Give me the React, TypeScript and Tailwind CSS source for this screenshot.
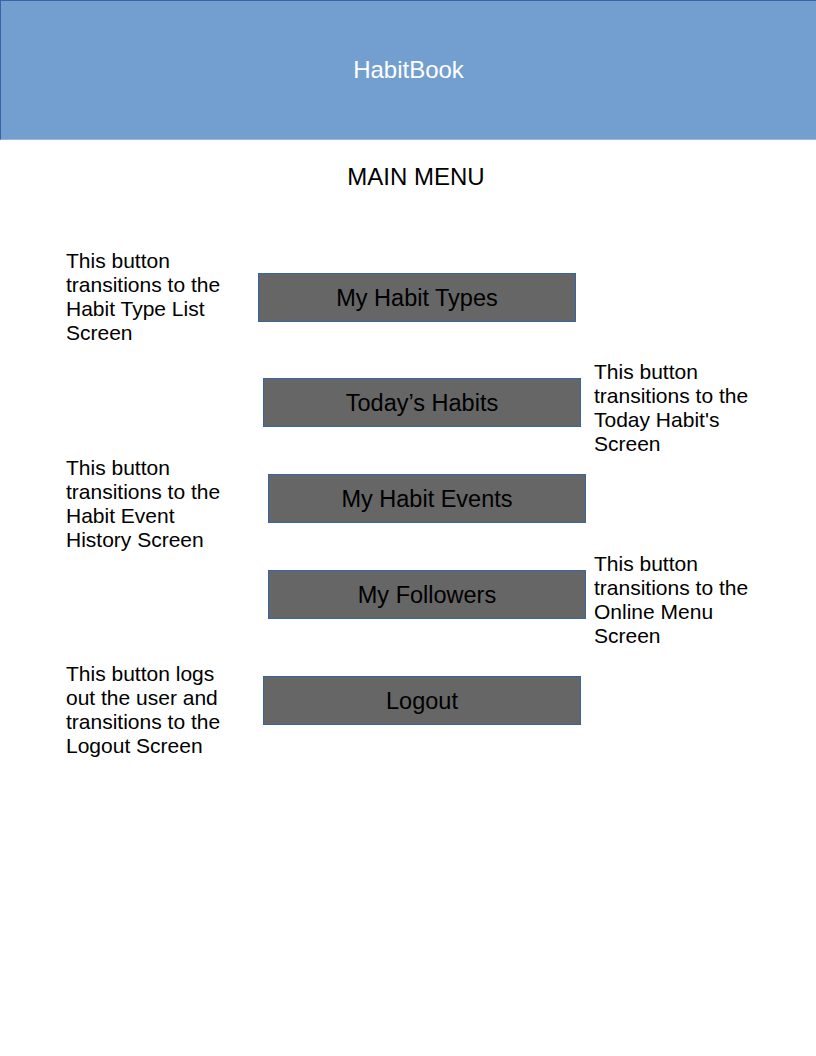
import React from "react";

const font = { fontFamily: '"Liberation Sans", Arial, sans-serif' };

function Note({ children }: { children: React.ReactNode }) {
  return <div className="w-[170px] -mt-[2px] text-[21px] leading-[24px] text-black">{children}</div>;
}

function Btn({ label }: { label: string }) {
  return (
    <div className="w-[318px] h-[49px] pt-[2px] bg-[#666666] border border-[#3465a4] flex items-center justify-center text-[23.5px] text-black">
      {label}
    </div>
  );
}

export default function App() {
  return (
    <div className="w-[816px] h-[1056px] bg-white overflow-hidden" style={font}>
      <div className="h-[140px] bg-[#729fcf] border-t border-l border-[#3465a4] border-b border-b-[#9db6da] flex items-center justify-center">
        <span className="text-white text-[24px]">HabitBook</span>
      </div>

      <div className="mt-[23px] pl-[16px] text-center text-[24px] leading-[28px] text-black">MAIN MENU</div>

      {/* Row 1 */}
      <div className="flex mt-[60px] h-[96px]">
        <div className="ml-[66px] w-[192px]">
          <Note>This button transitions to the Habit Type List Screen</Note>
        </div>
        <div className="mt-[22px]">
          <Btn label="My Habit Types" />
        </div>
      </div>

      {/* Row 2 */}
      <div className="flex mt-[15px] h-[96px]">
        <div className="ml-[66px] w-[192px]" />
        <div className="mt-[16px] ml-[5px]">
          <Btn label="Today’s Habits" />
        </div>
        <div className="ml-[13px]">
          <Note>This button transitions to the Today Habit's Screen</Note>
        </div>
      </div>

      {/* Row 3 */}
      <div className="flex h-[96px]">
        <div className="ml-[66px] w-[192px]">
          <Note>This button transitions to the Habit Event History Screen</Note>
        </div>
        <div className="mt-[16px] ml-[10px]">
          <Btn label="My Habit Events" />
        </div>
      </div>

      {/* Row 4 */}
      <div className="flex h-[96px]">
        <div className="ml-[66px] w-[192px]" />
        <div className="mt-[16px] ml-[10px]">
          <Btn label="My Followers" />
        </div>
        <div className="ml-[8px]">
          <Note>This button transitions to the Online Menu Screen</Note>
        </div>
      </div>

      {/* Row 5 */}
      <div className="flex mt-[14px] h-[96px]">
        <div className="ml-[66px] w-[192px]">
          <Note>This button logs out the user and transitions to the Logout Screen</Note>
        </div>
        <div className="mt-[12px] ml-[5px]">
          <Btn label="Logout" />
        </div>
      </div>
    </div>
  );
}
